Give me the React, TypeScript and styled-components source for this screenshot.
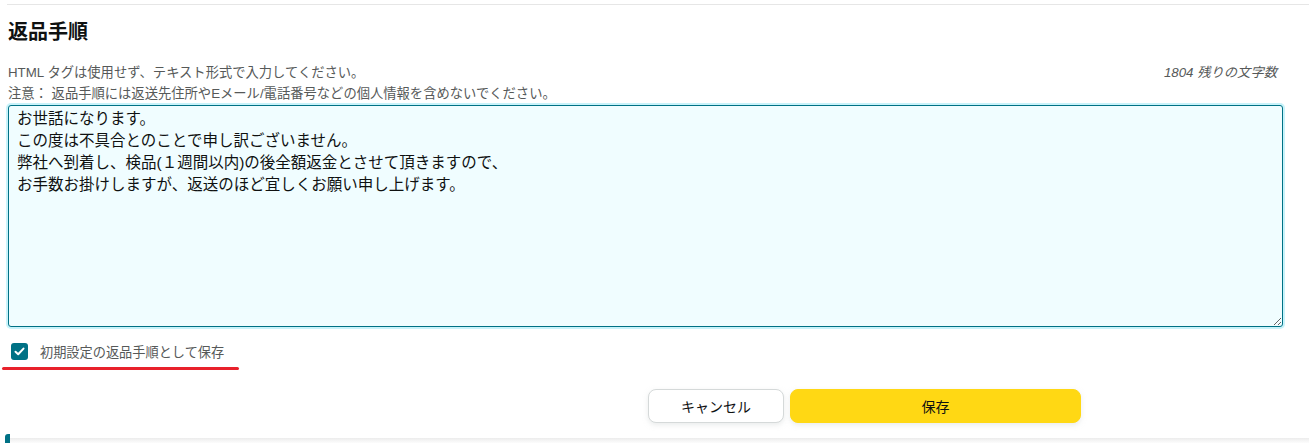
import styled, { createGlobalStyle } from "styled-components";

const GlobalStyle = createGlobalStyle`
	html, body {
		margin: 0;
		padding: 0;
		background: #ffffff;
	}
	body {
		font-family: "Liberation Sans", "Noto Sans CJK JP", sans-serif;
		color: #0f1111;
	}
	* {
		box-sizing: border-box;
	}
`;

const defaultText = [
	"お世話になります。",
	"この度は不具合とのことで申し訳ございません。",
	"弊社へ到着し、検品(１週間以内)の後全額返金とさせて頂きますので、",
	"お手数お掛けしますが、返送のほど宜しくお願い申し上げます。",
].join("\n");

export default function App() {
	return (
		<>
			<GlobalStyle />
			<Page>
				<TopRule />
				<Section>
					<Title>返品手順</Title>
					<HintBox>
						<HintRow>
							<Hint>HTML タグは使用せず、テキスト形式で入力してください。</Hint>
							<Counter>1804 残りの文字数</Counter>
						</HintRow>
						<Hint>注意： 返品手順には返送先住所やEメール/電話番号などの個人情報を含めないでください。</Hint>
					</HintBox>
					<TextArea defaultValue={defaultText} spellCheck={false} />
					<CheckRow>
						<CheckBox>
							<svg width="11" height="9" viewBox="0 0 11 9">
								<path
									d="M1.5 4.8 L4.2 7.3 L9.5 1.6"
									fill="none"
									stroke="#ffffff"
									strokeWidth="2"
									strokeLinecap="round"
									strokeLinejoin="round"
								/>
							</svg>
						</CheckBox>
						<CheckLabel>初期設定の返品手順として保存</CheckLabel>
					</CheckRow>
					<Underline />
					<ButtonRow>
						<Button $variant="secondary">キャンセル</Button>
						<Button $variant="primary">保存</Button>
					</ButtonRow>
				</Section>
				<NextCard />
			</Page>
		</>
	);
}

const Page = styled.div`
	width: 1309px;
	height: 443px;
	overflow: hidden;
	padding-top: 4px;
`;

const TopRule = styled.div`
	height: 1px;
	margin-left: 7px;
	background-color: #e6e6e6;
`;

const Section = styled.div`
	display: flex;
	flex-direction: column;
	padding: 0 26px 0 8px;
`;

const Title = styled.h2`
	margin: 13px 0 0 0;
	font-size: 20px;
	line-height: 28px;
	font-weight: 700;
	color: #0f1111;
`;

const HintBox = styled.div`
	display: flex;
	flex-direction: column;
	margin-top: 16px;
`;

const HintRow = styled.div`
	display: flex;
	justify-content: space-between;
	align-items: center;
`;

const Hint = styled.span`
	font-size: 13.3px;
	line-height: 21px;
	color: #565959;
`;

const Counter = styled.span`
	font-size: 13.3px;
	line-height: 21px;
	font-style: italic;
	color: #565959;
	margin-right: 6px;
`;

const TextArea = styled.textarea`
	display: block;
	margin-top: 1px;
	width: 100%;
	height: 222px;
	padding: 2px 8px;
	font-family: "Liberation Sans", "Noto Sans CJK JP", sans-serif;
	font-size: 15.5px;
	line-height: 22px;
	color: #0f1111;
	background-color: #f0fdff;
	border: 1px solid #007185;
	border-radius: 3px;
	box-shadow: 0 0 0 2px #c8f3fa;
	outline: none;
	resize: both;
`;

const CheckRow = styled.label`
	display: flex;
	align-items: center;
	gap: 12px;
	margin-top: 14px;
	padding-left: 3px;
	height: 20px;
`;

const CheckBox = styled.span`
	display: inline-flex;
	align-items: center;
	justify-content: center;
	width: 17px;
	height: 17px;
	border-radius: 3px;
	background-color: #007185;
`;

const CheckLabel = styled.span`
	font-size: 13.2px;
	color: #565959;
`;

const Underline = styled.div`
	width: 237px;
	height: 3px;
	margin: 6px 0 0 -6px;
	border-radius: 2px;
	background-color: #e8212b;
`;

const Button = styled.button<{ $variant: "primary" | "secondary" }>`
	height: 34px;
	width: ${(p) => (p.$variant === "primary" ? "291px" : "136px")};
	font-family: "Liberation Sans", "Noto Sans CJK JP", sans-serif;
	font-size: 14px;
	color: #0f1111;
	border-radius: 8px;
	cursor: pointer;
	border: 1px solid ${(p) => (p.$variant === "primary" ? "#ffd814" : "#d5d9d9")};
	background-color: ${(p) => (p.$variant === "primary" ? "#ffd814" : "#ffffff")};
	box-shadow: 0 2px 5px 0 rgba(213, 217, 217, 0.5);
`;

const ButtonRow = styled.div`
	display: flex;
	justify-content: flex-end;
	gap: 6px;
	margin-top: 19px;
	padding-right: 202px;
`;

const NextCard = styled.div`
	margin: 11px 0 0 5px;
	height: 20px;
	border-left: 5px solid #007185;
	border-top-left-radius: 3px;
	background: linear-gradient(#ffffff 0, #ffffff 4px, #ececec 4px, #f6f6f6 7px, #ffffff 10px);
`;
